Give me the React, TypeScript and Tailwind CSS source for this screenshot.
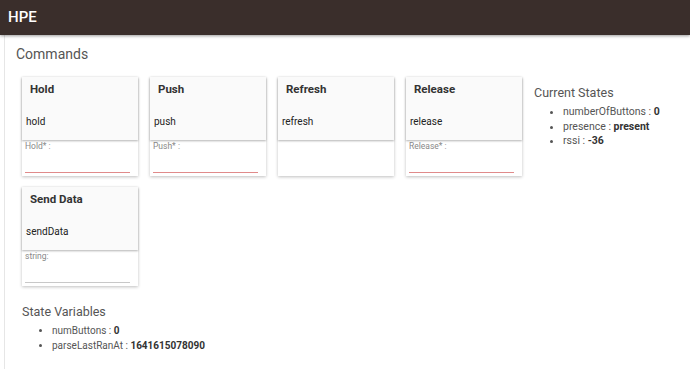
import React from "react";

type Cmd = { title: string; name: string; label?: string; required?: boolean };

const cmds: Cmd[] = [
  { title: "Hold", name: "hold", label: "Hold* :", required: true },
  { title: "Push", name: "push", label: "Push* :", required: true },
  { title: "Refresh", name: "refresh" },
  { title: "Release", name: "release", label: "Release* :", required: true },
  { title: "Send Data", name: "sendData", label: "string:" },
];

function Card({ c }: { c: Cmd }) {
  return (
    <div className="w-[116px] bg-white shadow-[0_1px_3px_rgba(0,0,0,0.25)]">
      <div className="h-[63px] bg-[#fafafa] shadow-[0_1px_2px_rgba(0,0,0,0.3)] relative flex flex-col">
        <div className="pl-[8px] pt-[5px] text-[11.5px] font-bold text-[#333] leading-[14px]">{c.title}</div>
        <div className="pl-[4px] mt-[20px] text-[10px] text-[#222] leading-[12px]">{c.name}</div>
      </div>
      <div className="h-[36px] px-[3px] pt-[1px] flex flex-col">
        {c.label ? (
          <>
            <div className="text-[8.5px] text-[#888] leading-[11px]">{c.label}</div>
            <div
              className={
                "mt-auto mb-[3px] mr-[5px] h-px " +
                (c.required ? "bg-[#e08a8a]" : "bg-[#c8c8c8]")
              }
            />
          </>
        ) : null}
      </div>
    </div>
  );
}

export default function App() {
  return (
    <div className="w-[690px] h-[369px] bg-white overflow-hidden" style={{ fontFamily: "Roboto, 'Liberation Sans', sans-serif" }}>
      <div className="h-[35px] bg-[#3a2e2b] shadow-[0_1px_3px_rgba(0,0,0,0.4)] flex items-center pl-[8px] relative z-10">
        <span className="text-white text-[15px] font-medium">HPE</span>
      </div>
      <div className="ml-[4px] border-l border-[#e6e6e6] h-[334px] pl-[11px] pt-[10px]">
        <div className="text-[14px] text-[#555] leading-[18px]">Commands</div>
        <div className="pl-[6px] mt-[14px] flex">
          <div className="w-[512px] flex flex-wrap gap-x-[12px] gap-y-[11px]">
            {cmds.map((c) => (
              <Card key={c.name} c={c} />
            ))}
          </div>
          <div className="pt-[8px]">
            <div className="text-[12.5px] text-[#555] leading-[16px]">Current States</div>
            <ul className="mt-[4px] pl-[29px] list-disc text-[10.5px] text-[#555] leading-[14.5px]">
              <li>numberOfButtons : <b className="text-[#333]">0</b></li>
              <li>presence : <b className="text-[#333]">present</b></li>
              <li>rssi : <b className="text-[#333]">-36</b></li>
            </ul>
          </div>
        </div>
        <div className="pl-[6px] mt-[18px]">
          <div className="text-[12.5px] text-[#555] leading-[16px]">State Variables</div>
          <ul className="mt-[3px] pl-[30px] list-disc text-[10px] text-[#555] leading-[15px]">
            <li>numButtons : <b className="text-[#333]">0</b></li>
            <li>parseLastRanAt : <b className="text-[#333]">1641615078090</b></li>
          </ul>
        </div>
      </div>
    </div>
  );
}
